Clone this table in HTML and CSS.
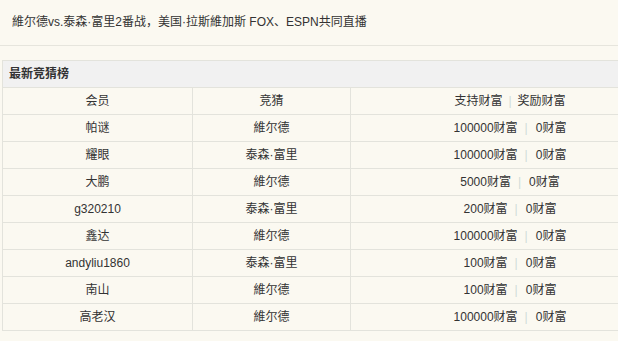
FILE: index.html
```html
<!DOCTYPE html>
<html lang="zh-CN">
<head>
<meta charset="utf-8">
<title>最新竞猜榜</title>
<link rel="stylesheet" href="styles.css">
</head>
<body>
<div class="title">維尔德vs.泰森·富里2番战，美国·拉斯維加斯 FOX、ESPN共同直播</div>
<div class="board">
  <div class="board-head">最新竞猜榜</div>
  <div class="row">
    <div class="cell">会员</div>
    <div class="cell">竞猜</div>
    <div class="cell">支持财富<span class="sep sep-h">|</span>奖励财富</div>
  </div>
  <div class="row">
    <div class="cell">帕谜</div>
    <div class="cell">維尔德</div>
    <div class="cell">100000财富<span class="sep">|</span>0财富</div>
  </div>
  <div class="row">
    <div class="cell">耀眼</div>
    <div class="cell">泰森·富里</div>
    <div class="cell">100000财富<span class="sep">|</span>0财富</div>
  </div>
  <div class="row">
    <div class="cell">大鹏</div>
    <div class="cell">維尔德</div>
    <div class="cell">5000财富<span class="sep">|</span>0财富</div>
  </div>
  <div class="row">
    <div class="cell">g320210</div>
    <div class="cell">泰森·富里</div>
    <div class="cell">200财富<span class="sep">|</span>0财富</div>
  </div>
  <div class="row">
    <div class="cell">鑫达</div>
    <div class="cell">維尔德</div>
    <div class="cell">100000财富<span class="sep">|</span>0财富</div>
  </div>
  <div class="row">
    <div class="cell">andyliu1860</div>
    <div class="cell">泰森·富里</div>
    <div class="cell">100财富<span class="sep">|</span>0财富</div>
  </div>
  <div class="row">
    <div class="cell">南山</div>
    <div class="cell">維尔德</div>
    <div class="cell">100财富<span class="sep">|</span>0财富</div>
  </div>
  <div class="row">
    <div class="cell">高老汉</div>
    <div class="cell">維尔德</div>
    <div class="cell">100000财富<span class="sep">|</span>0财富</div>
  </div>
</div>
</body>
</html>
```
FILE: styles.css
```css
body {
  margin: 0;
  background: #fbf9f1;
  color: #333;
  font-family: "Liberation Sans", "Noto Sans CJK SC", sans-serif;
  font-size: 12px;
}
.title {
  height: 46px;
  box-sizing: border-box;
  padding-left: 12px;
  line-height: 44px;
  border-bottom: 1px solid #e6e5dd;
  white-space: nowrap;
}
.board {
  margin: 14px 0 0 2px;
  border: 1px solid #e3e3dc;
  border-right: none;
  white-space: nowrap;
}
.board-head {
  height: 26px;
  line-height: 26px;
  padding-left: 6px;
  background: #f1f1f1;
  font-weight: bold;
}
.row {
  display: grid;
  grid-template-columns: 189px 158px 1fr;
  height: 27px;
  box-sizing: border-box;
  border-top: 1px solid #e3e3dc;
}
.cell {
  text-align: center;
  line-height: 26px;
}
.cell + .cell {
  border-left: 1px solid #e3e3dc;
}
.cell:last-child {
  padding-left: 51px;
}
.sep {
  color: #cfdcd8;
  margin: 0 8px 0 7px;
}
.sep-h {
  margin: 0 6px;
}
```
